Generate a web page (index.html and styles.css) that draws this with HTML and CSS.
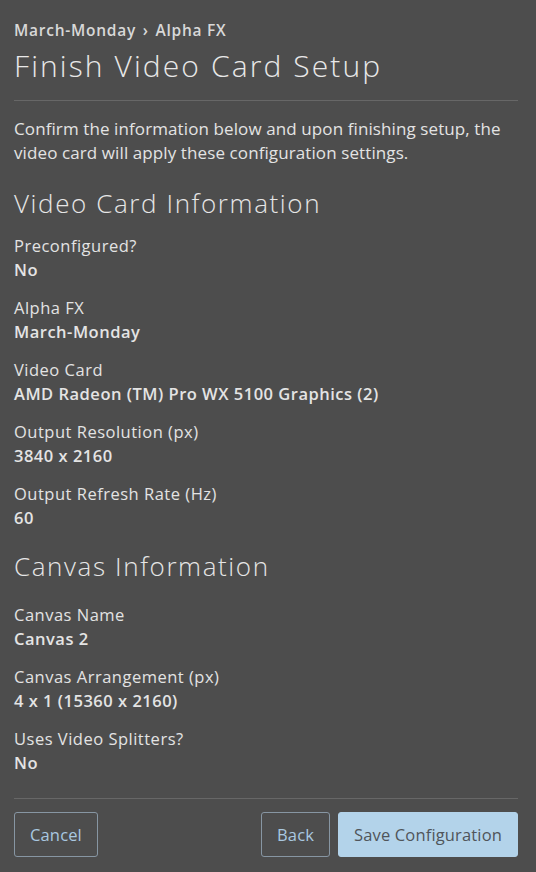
FILE: index.html
```html
<!DOCTYPE html>
<html lang="en">
<head>
<meta charset="utf-8">
<title>Finish Video Card Setup</title>
<link rel="stylesheet" href="styles.css">
</head>
<body>
<div class="page">
  <header class="head">
    <div class="crumbs">March-Monday <span class="sep">›</span> Alpha FX</div>
    <h1 class="title">Finish Video Card Setup</h1>
  </header>
  <main class="body">
    <p class="intro">Confirm the information below and upon finishing setup, the video card will apply these configuration settings.</p>
    <h2 class="section">Video Card Information</h2>
    <dl class="fields">
      <div class="field"><dt>Preconfigured?</dt><dd>No</dd></div>
      <div class="field"><dt>Alpha FX</dt><dd>March-Monday</dd></div>
      <div class="field"><dt>Video Card</dt><dd>AMD Radeon (TM) Pro WX 5100 Graphics (2)</dd></div>
      <div class="field"><dt>Output Resolution (px)</dt><dd>3840 x 2160</dd></div>
      <div class="field"><dt>Output Refresh Rate (Hz)</dt><dd>60</dd></div>
    </dl>
    <h2 class="section">Canvas Information</h2>
    <dl class="fields fields-canvas">
      <div class="field"><dt>Canvas Name</dt><dd>Canvas 2</dd></div>
      <div class="field"><dt>Canvas Arrangement (px)</dt><dd>4 x 1 (15360 x 2160)</dd></div>
      <div class="field"><dt>Uses Video Splitters?</dt><dd>No</dd></div>
    </dl>
  </main>
  <footer class="actions">
    <button class="btn btn-outline">Cancel</button>
    <div class="right">
      <button class="btn btn-outline">Back</button>
      <button class="btn btn-primary">Save Configuration</button>
    </div>
  </footer>
</div>
</body>
</html>
```

FILE: styles.css
```css
html, body {
  margin: 0;
  padding: 0;
  background: #4d4d4d;
}
body {
  font-family: "Open Sans", "Liberation Sans", sans-serif;
  color: #e3e3e3;
}
.page {
  padding: 20px 18px 0 14px;
  display: flex;
  flex-direction: column;
}
.head {
  border-bottom: 1px solid #676767;
  padding-bottom: 15px;
}
.crumbs {
  font-size: 15.5px;
  font-weight: 600;
  line-height: 20px;
  letter-spacing: 0.75px;
  color: #d8d8d8;
}
.sep {
  margin: 0 2px;
}
.title {
  margin: 7px 0 0;
  font-size: 30px;
  font-weight: 300;
  line-height: 38px;
  letter-spacing: 2.1px;
  color: #e8e8e8;
}
.body {
  padding-top: 16px;
}
.intro {
  margin: 0;
  font-size: 17px;
  line-height: 24px;
  letter-spacing: 0.1px;
}
.section {
  margin: 22px 0 15px;
  font-size: 26px;
  font-weight: 300;
  line-height: 32px;
  letter-spacing: 1.6px;
  color: #e6e6e6;
}
.fields {
  margin: 0;
  display: flex;
  flex-direction: column;
  gap: 14px;
}
.fields + .section {
  margin-top: 20px;
}
.fields-canvas {
  margin-top: 21px;
}
.field dt {
  font-size: 16.5px;
  line-height: 24px;
  letter-spacing: 0.5px;
}
.field dd {
  margin: 0;
  font-size: 16.5px;
  font-weight: 600;
  line-height: 24px;
  letter-spacing: 0.5px;
  color: #e4e4e4;
}
.actions {
  margin-top: 23px;
  border-top: 1px solid #676767;
  padding-top: 13px;
  display: flex;
  justify-content: space-between;
}
.right {
  display: flex;
  gap: 8px;
}
.btn {
  font-family: inherit;
  font-size: 16.5px;
  letter-spacing: 0.15px;
  height: 45px;
  padding: 0 15px;
  border-radius: 3px;
  cursor: pointer;
}
.btn-outline {
  background: transparent;
  border: 1px solid #8796a3;
  color: #a9c8e0;
}
.btn-primary {
  background: #b3d3ea;
  border: 1px solid #b3d3ea;
  color: #50555a;
}
```
